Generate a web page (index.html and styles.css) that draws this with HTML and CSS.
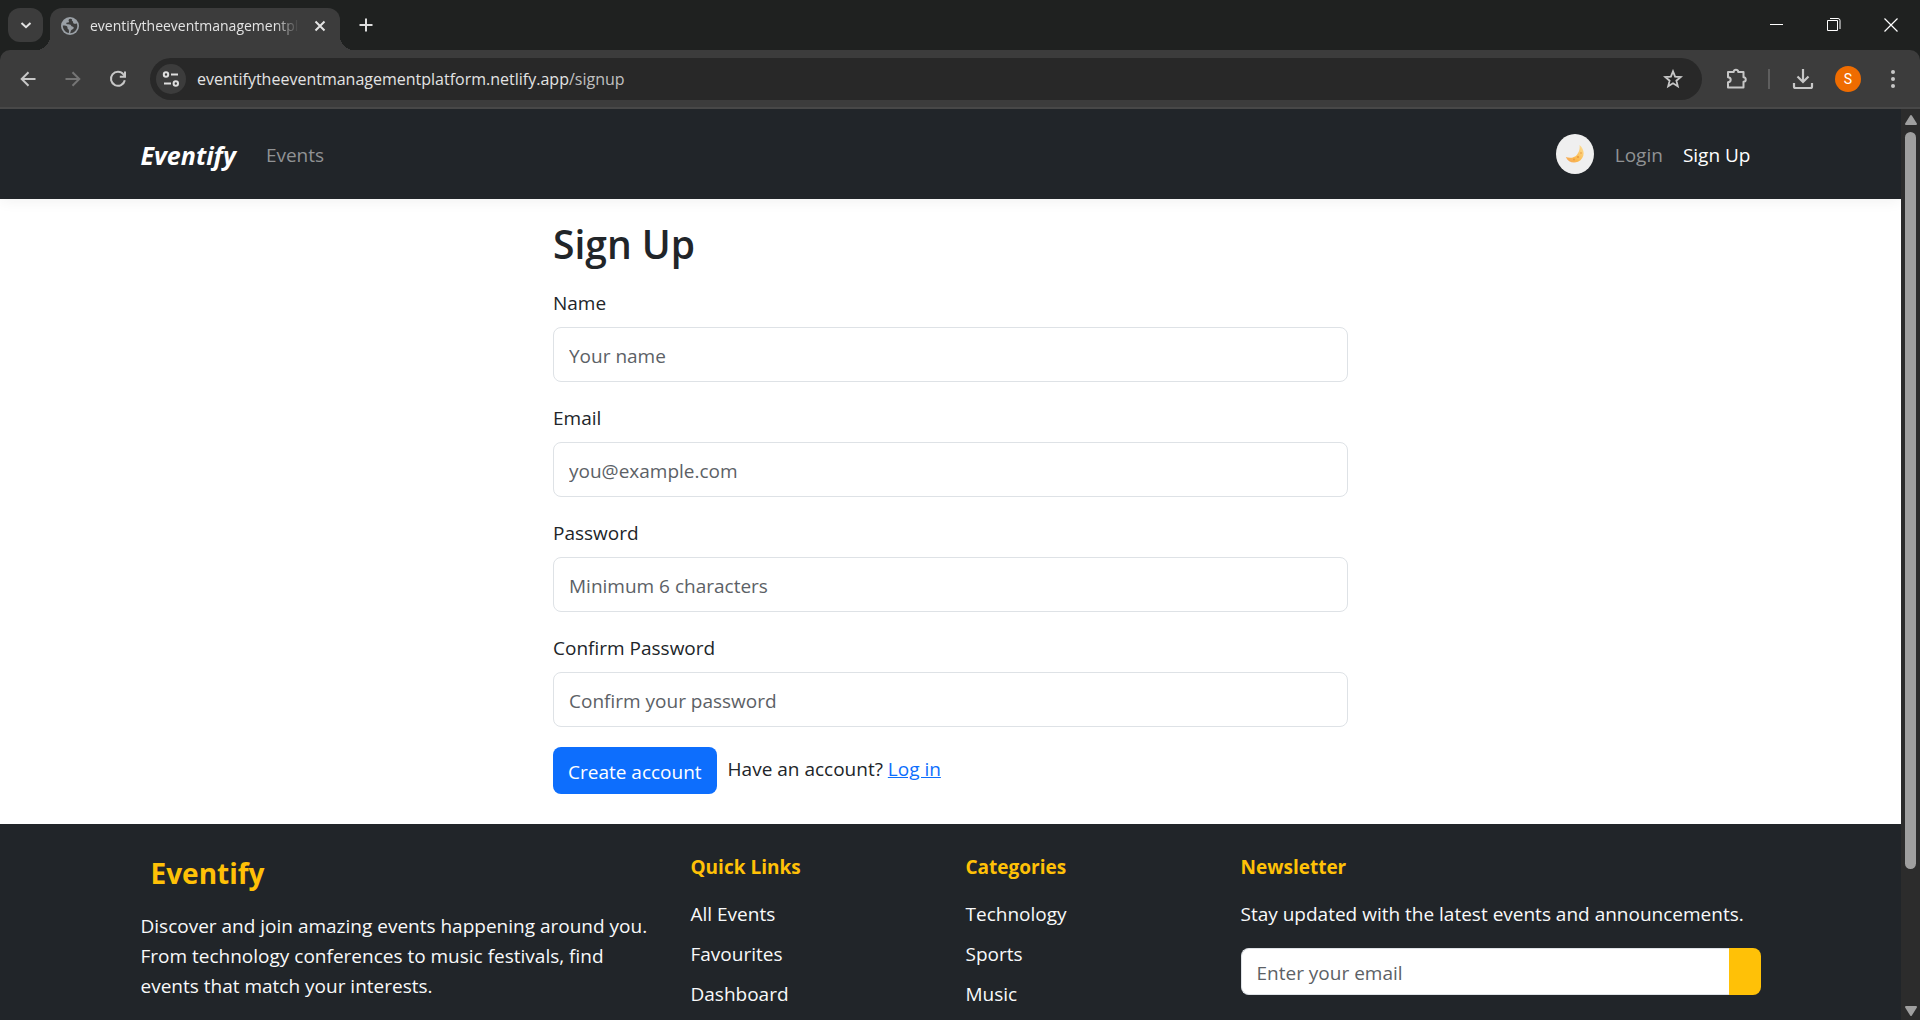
FILE: index.html
```html
<!DOCTYPE html>
<html lang="en">
<head>
<meta charset="utf-8">
<meta name="viewport" content="width=device-width, initial-scale=1">
<title>Eventify</title>
<link rel="stylesheet" href="styles.css">
</head>
<body>
<div class="browser">
  <div class="tabstrip">
    <button class="tab-search" type="button" aria-label="Search tabs">
      <svg width="20" height="20" viewBox="0 0 20 20"><path d="M5.5 8 10 12.200 14.500 8" fill="none" stroke="#e3e3e3" stroke-width="2"/></svg>
    </button>
    <div class="tab">
      <svg class="globe" width="18" height="18" viewBox="0 0 18 18"><circle cx="9" cy="9" r="9" fill="#9aa0a6"/><path d="M9.500 1.800c-2 .3-2.200 1.500-1.700 2.300.6.900-.2 1.700-1.400 1.500-1.300-.2-1.500 1.300-.5 1.700 1.800.1 3.900-.1 4.300 1.500.3 1.200 1.800.5 2.400 1.500.5.900-.2 1.800-1.400 2.100-1.500.3-1.300 2-2.100 3.800 3.900 0 7.200-3.200 7.200-7.200 0-1-.2-1.900-.6-2.700-.6.600-2 .8-3 .2-.9-.6-.3-1.500-1-2.200-.6-.6-1.300-1.200-.5-2.100ZM1.800 8.600c1.700-.1 3.600 0 4.500 1.100.6.800-.3 1.400.5 2.100.8.600 1.500 1.100 1.100 4.300C4.500 15.700 1.800 12.400 1.800 8.600Z" fill="#3c3c3c"/></svg>
      <span class="tab-title">eventifytheeventmanagementplatform</span>
      <button class="icon-btn tab-close" type="button" aria-label="Close tab">
        <svg width="12" height="12" viewBox="0 0 12 12"><path d="m1.500 1.500 9 9m0-9-9 9" stroke="#e3e3e3" stroke-width="2"/></svg>
      </button>
    </div>
    <button class="icon-btn new-tab" type="button" aria-label="New tab">
      <svg width="14" height="14" viewBox="0 0 14 14"><path d="M7 .5v13M.5 7h13" stroke="#dedede" stroke-width="2"/></svg>
    </button>
    <div class="window-controls">
      <button class="icon-btn" type="button" aria-label="Minimize"><svg width="14" height="14" viewBox="0 0 14 14"><path d="M0 6.500h13" stroke="#fff"/></svg></button>
      <button class="icon-btn" type="button" aria-label="Restore"><svg width="14" height="14" viewBox="0 0 14 14" fill="none" stroke="#fff"><path d="M.5 2.500h10v10H.5zM3 .5h8a2 2 0 0 1 2 2V11"/></svg></button>
      <button class="icon-btn" type="button" aria-label="Close"><svg width="14" height="14" viewBox="0 0 14 14"><path d="m.5.500 13 13m0-13-13 13" stroke="#fff" stroke-width="1.200"/></svg></button>
    </div>
  </div>

  <div class="toolbar">
    <div class="history">
      <button class="icon-btn" type="button" aria-label="Back"><svg width="20" height="20" viewBox="0 0 20 20" fill="none" stroke="#c7c7c7" stroke-width="2"><path d="M17.500 10H4M10.500 3.200 3.700 10l6.800 6.800"/></svg></button>
      <button class="icon-btn" type="button" aria-label="Forward" disabled><svg width="20" height="20" viewBox="0 0 20 20" fill="none" stroke="#757575" stroke-width="2"><path d="M2.500 10H16M9.500 3.200l6.800 6.800-6.800 6.800"/></svg></button>
      <button class="icon-btn" type="button" aria-label="Reload"><svg width="20" height="20" viewBox="0 0 20 20" fill="none" stroke="#c7c7c7" stroke-width="2"><path d="M16.800 11.200A7 7 0 1 1 15.500 5.500L17 7.200"/><path d="M17 2.500v5.200h-5.200"/></svg></button>
    </div>
    <div class="omnibox">
      <button class="site-info" type="button" aria-label="View site information">
        <svg width="18" height="18" viewBox="0 0 18 18" fill="none" stroke="#dedede" stroke-width="2"><circle cx="4" cy="4.500" r="2.200"/><path d="M9 4.500h7M2 13.500h7"/><circle cx="13.800" cy="13.500" r="2.200"/></svg>
      </button>
      <div class="url" role="textbox" aria-label="Address">eventifytheeventmanagementplatform.netlify.app<span class="url-path">/signup</span></div>
      <button class="icon-btn" type="button" aria-label="Bookmark this tab"><svg width="20" height="20" viewBox="0 0 20 20" fill="none" stroke="#c7c7c7" stroke-width="1.800"><path d="m10 2.300 2.100 5.300 5.700.4-4.400 3.700 1.400 5.600L10 14.200l-4.800 3.100 1.400-5.600L2.200 8l5.700-.4Z"/></svg></button>
    </div>
    <div class="actions">
      <button class="icon-btn" type="button" aria-label="Extensions"><svg width="22" height="22" viewBox="0 0 22 22"><path d="M3 4h4.700c-.1-3 4.600-3 4.500 0H17.500v5.200c3 .1 3 4.500 0 4.600v5.700H2v-5.200c3.600-.2 3.600-4.900 0-5.100V4Z" fill="none" stroke="#c7c7c7" stroke-width="2" stroke-linejoin="round"/></svg></button>
      <span class="divider"></span>
      <button class="icon-btn" type="button" aria-label="Downloads"><svg width="22" height="22" viewBox="0 0 22 22" fill="none" stroke="#c7c7c7" stroke-width="2.200"><path d="M11 1v12.500M5.500 8.500 11 14l5.500-5.500M2 15v3.500a1.500 1.500 0 0 0 1.500 1.500h15a1.500 1.500 0 0 0 1.500-1.500V15"/></svg></button>
      <button class="avatar" type="button" aria-label="Profile">S</button>
      <button class="icon-btn" type="button" aria-label="Menu"><svg width="20" height="20" viewBox="0 0 20 20" fill="#c7c7c7"><circle cx="10" cy="3" r="2"/><circle cx="10" cy="10" r="2"/><circle cx="10" cy="17" r="2"/></svg></button>
    </div>
  </div>

  <div class="viewport">
    <div class="page">
      <header class="navbar">
        <nav class="container navbar-inner">
          <a class="brand" href="#">Eventify</a>
          <a class="nav-link" href="#">Events</a>
          <div class="nav-right">
            <button class="theme-toggle" type="button" aria-label="Switch to dark theme">
              <svg width="20" height="20" viewBox="0 0 20 20"><defs><linearGradient id="moon" x1="0" y1="1" x2="1" y2="0"><stop offset="0" stop-color="#f3a45c"/><stop offset=".4" stop-color="#fbb94d"/><stop offset="1" stop-color="#fde09a"/></linearGradient></defs><path d="M14.500 1c6 5 5.500 13.500-1.500 16.800-5 2-10 .2-12.200-4.800 4 1.500 8.500 1 11.200-2.300 2.300-2.900 3-6.300 2.500-9.700Z" fill="url(#moon)"/><g fill="#e99a3e"><circle cx="13" cy="13" r="1.100"/><circle cx="9" cy="15.500" r=".9"/><circle cx="16" cy="9" r=".8"/></g></svg>
            </button>
            <a class="nav-link" href="#">Login</a>
            <a class="nav-link active" href="#">Sign Up</a>
          </div>
        </nav>
      </header>

      <main class="signup">
        <h1>Sign Up</h1>
        <form>
          <div class="field"><label for="name">Name</label><input id="name" type="text" placeholder="Your name"></div>
          <div class="field"><label for="email">Email</label><input id="email" type="email" placeholder="you@example.com"></div>
          <div class="field"><label for="password">Password</label><input id="password" type="password" placeholder="Minimum 6 characters"></div>
          <div class="field"><label for="confirm">Confirm Password</label><input id="confirm" type="password" placeholder="Confirm your password"></div>
          <div class="submit-row">
            <button class="primary" type="submit">Create account</button>
            <p>Have an account? <a href="#">Log in</a></p>
          </div>
        </form>
      </main>

      <footer class="footer">
        <div class="container footer-grid">
          <section class="about">
            <h2>Eventify</h2>
            <p>Discover and join amazing events happening around you. From technology conferences to music festivals, find events that match your interests.</p>
          </section>
          <section>
            <h3>Quick Links</h3>
            <ul>
              <li><a href="#">All Events</a></li>
              <li><a href="#">Favourites</a></li>
              <li><a href="#">Dashboard</a></li>
            </ul>
          </section>
          <section>
            <h3>Categories</h3>
            <ul>
              <li><a href="#">Technology</a></li>
              <li><a href="#">Sports</a></li>
              <li><a href="#">Music</a></li>
            </ul>
          </section>
          <section>
            <h3>Newsletter</h3>
            <p>Stay updated with the latest events and announcements.</p>
            <form class="newsletter">
              <input type="email" placeholder="Enter your email" aria-label="Email for newsletter">
              <button type="submit" aria-label="Subscribe"></button>
            </form>
          </section>
        </div>
      </footer>
    </div>
    <div class="scrollbar" aria-hidden="true">
      <svg width="14" height="12" viewBox="0 0 14 12"><path d="M7 2 12 10H2Z" fill="#9f9f9f" stroke="#9f9f9f" stroke-width="2" stroke-linejoin="round"/></svg>
      <div class="track"><div class="thumb"></div></div>
      <svg width="14" height="12" viewBox="0 0 14 12"><path d="M7 10 2 2h10Z" fill="#9f9f9f" stroke="#9f9f9f" stroke-width="2" stroke-linejoin="round"/></svg>
    </div>
  </div>
</div>
</body>
</html>
```
FILE: styles.css
```css
* { box-sizing: border-box; }

body {
  margin: 0;
  font-family: "Open Sans", "Noto Sans", sans-serif;
  font-size: 19px;
  line-height: 30px;
  color: #212529;
}

h1, h2, h3, p, ul { margin: 0; padding: 0; }
button, input { font: inherit; margin: 0; }
button { border: 0; padding: 0; background: none; color: inherit; }
svg { display: block; }

.browser {
  display: flex;
  flex-direction: column;
  height: 100vh;
  overflow: hidden;
  background: #1f2120;
}

/* Tab strip */
.tabstrip { display: flex; flex: none; height: 50px; padding: 8px 1px 0 8px; }
.icon-btn { display: grid; place-items: center; flex: none; }
.tab-search {
  display: grid;
  place-items: center;
  width: 35px;
  height: 34px;
  border-radius: 12px;
  background: #3c3c3c;
}
.tab {
  position: relative;
  display: flex;
  align-items: center;
  gap: 11px;
  width: 290px;
  margin-left: 7px;
  padding: 0 14px 6px 11px;
  border-radius: 12px 12px 0 0;
  background: #3c3c3c;
}
.tab::before, .tab::after {
  content: "";
  position: absolute;
  bottom: 0;
  width: 14px;
  height: 14px;
}
.tab::before { right: 100%; background: radial-gradient(circle at 0 0, transparent 14px, #3c3c3c 14px); }
.tab::after { left: 100%; background: radial-gradient(circle at 100% 0, transparent 14px, #3c3c3c 14px); }
.tab-title {
  flex: 1;
  overflow: hidden;
  white-space: nowrap;
  font-size: 14px;
  color: #e3e3e3;
  mask-image: linear-gradient(to left, transparent, #000 24px);
}
.tab-close { width: 12px; margin-left: 4px; }
.new-tab { width: 34px; height: 34px; margin-left: 9px; }
.window-controls { display: flex; margin-left: auto; }
.window-controls .icon-btn { width: 57px; height: 34px; }

/* Toolbar */
.toolbar {
  display: flex;
  align-items: center;
  flex: none;
  height: 59px;
  padding: 0 17px 0 8px;
  border-bottom: 2px solid #484848;
  border-radius: 10px 10px 0 0;
  background: #3c3c3c;
}
.history { display: flex; gap: 5px; }
.history .icon-btn { width: 40px; height: 40px; }
.omnibox {
  display: flex;
  align-items: center;
  flex: 1;
  height: 42px;
  margin-left: 12px;
  padding: 0 19px 0 6px;
  border-radius: 21px;
  background: #282828;
}
.site-info {
  display: grid;
  place-items: center;
  width: 30px;
  height: 30px;
  border-radius: 50%;
  background: #3c3c3c;
}
.url { flex: 1; margin-left: 11px; font-size: 16px; color: #e3e3e3; }
.url-path { color: #c0c0c0; }
.actions { display: flex; align-items: center; margin-left: 24px; }
.divider { width: 2px; height: 20px; margin: 0 22px 0 20px; background: #5e5e5e; }
.avatar {
  width: 26px;
  height: 26px;
  margin: 0 22px 0 21px;
  border-radius: 50%;
  background: #ef6c00;
  color: #fff;
  font: 14px/26px Roboto, sans-serif;
}

/* Page area */
.viewport { display: flex; flex: 1; min-height: 0; background: #fff; }
.page { display: flex; flex: 1; flex-direction: column; min-width: 0; overflow: hidden; }
.container { width: 100%; max-width: 1650px; margin: 0 auto; padding: 0 15px; }

.navbar {
  flex: none;
  padding: 20px 0;
  background: #212529;
  box-shadow: 0 2px 14px rgba(0, 0, 0, 0.06);
}
.navbar-inner { display: flex; align-items: center; height: 50px; }
.brand {
  margin-right: 20px;
  padding-top: 2px;
  font-size: 25px;
  font-style: italic;
  font-weight: 700;
  color: #fff;
  text-decoration: none;
}
.nav-link { padding: 12px 10px 10px; color: #909294; text-decoration: none; }
.nav-link.active { color: #fff; }
.nav-right { display: flex; align-items: center; margin-left: auto; }
.theme-toggle {
  display: grid;
  place-items: center;
  width: 38px;
  height: 40px;
  margin-right: 11px;
  border-radius: 50%;
  background: #efefef;
}

/* Sign-up form */
.signup {
  flex: none;
  width: 100%;
  max-width: 825px;
  margin: 0 auto;
  padding: 21px 15px 30px;
}
h1 { margin-bottom: 20px; font-size: 39px; font-weight: 600; line-height: 48px; }
.field { margin-bottom: 20px; }
.field label { display: block; width: fit-content; margin-bottom: 9px; }
.field input {
  display: block;
  width: 100%;
  height: 55px;
  padding: 2px 15px 0;
  border: 1px solid #dee2e6;
  border-radius: 8px;
  background: #fff;
}
.field + .field label { padding-top: 1px; margin-top: -1px; margin-bottom: 9px; }
.field + .field { padding-top: 1px; }
input::placeholder { color: #5c6166; opacity: 1; }
.submit-row { display: flex; align-items: flex-start; gap: 11px; }
.submit-row p { padding-top: 7px; }
.submit-row a { color: #0d6efd; }
.primary {
  height: 47px;
  padding: 2px 15px 0;
  border-radius: 8px;
  background: #0d6efd;
  color: #fff;
}

/* Footer */
.footer { flex: 1 0 auto; padding: 31px 0 30px; background: #212529; color: #f8f9fa; }
.footer-grid { display: grid; grid-template-columns: 520fr 245fr 245fr 520fr; gap: 30px; }
.footer-grid section { min-width: 0; }
h2, h3 { margin-bottom: 20px; font-weight: 700; color: #ffc107; }
h2 { padding-left: 10px; font-size: 28px; line-height: 36px; }
h3 { font-size: 19px; line-height: 24px; }
.footer ul { list-style: none; }
.footer li { margin-bottom: 10px; }
.footer a { color: inherit; text-decoration: none; }
.newsletter { display: flex; margin-top: 19px; }
.newsletter input {
  flex: 1;
  min-width: 0;
  height: 47px;
  padding: 2px 15px 0;
  border: 1px solid #dee2e6;
  border-right: 0;
  border-radius: 8px 0 0 8px;
  background: #fff;
}
.newsletter button { width: 32px; border-radius: 0 8px 8px 0; background: #ffc107; }

/* Scrollbar */
.scrollbar {
  display: flex;
  flex-direction: column;
  align-items: center;
  flex: none;
  width: 19px;
  padding: 5px 0 3px;
  background: #2c2c2c;
}
.track { flex: 1; padding: 6px 0; }
.thumb { width: 11px; height: 85%; border-radius: 6px; background: #9f9f9f; }
```
